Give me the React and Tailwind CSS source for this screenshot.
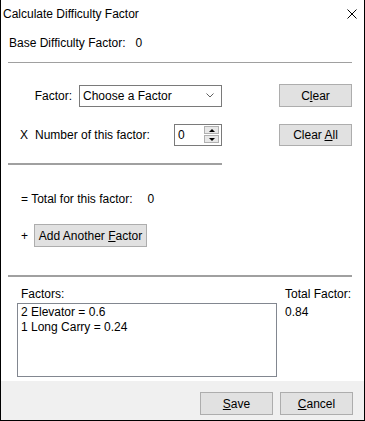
import React from 'react';

const FONT = { fontFamily: '"Liberation Sans", Arial, sans-serif' };

function WinButton({ children, className = '' }) {
  return (
    <div
      className={`flex items-center justify-center bg-[#e1e1e1] border border-[#adadad] text-[12px] leading-[16px] text-black ${className}`}
    >
      {children}
    </div>
  );
}

function Spinner({ value }) {
  return (
    <div className="flex w-[48px] h-[22px] border border-[#7a7a7a] bg-white">
      <div className="flex-1 pl-[3px] leading-[20px] text-black">{value}</div>
      <div className="flex flex-col pt-[1px] mr-[2px] gap-[1px]">
        <div className="flex items-center justify-center w-[15px] h-[8px] bg-[#e8e8e8] border border-[#b0b0b0]">
          <svg width="6" height="3" viewBox="0 0 6 3">
            <path d="M0 3 L3 0 L6 3 Z" fill="#000" />
          </svg>
        </div>
        <div className="flex items-center justify-center w-[15px] h-[8px] bg-[#e8e8e8] border border-[#b0b0b0]">
          <svg width="6" height="3" viewBox="0 0 6 3">
            <path d="M0 0 L6 0 L3 3 Z" fill="#000" />
          </svg>
        </div>
      </div>
    </div>
  );
}

export default function App() {
  const factors = ['2 Elevator = 0.6', '1 Long Carry = 0.24'];

  return (
    <div
      style={FONT}
      className="w-[365px] h-[421px] flex flex-col bg-white border-x border-b border-black text-[12px] leading-[16px] text-black"
    >
      {/* Title bar */}
      <div className="h-[27px] flex items-center justify-between pl-[2px] pr-[7px]">
        <span>Calculate Difficulty Factor</span>
        <svg width="10" height="10" viewBox="0 0 10 10">
          <path d="M0.5 0.5 L9.5 9.5 M9.5 0.5 L0.5 9.5" stroke="#000" strokeWidth="1" />
        </svg>
      </div>

      <div className="flex-1 flex flex-col">
        {/* Base factor */}
        <div className="mt-[8px] pl-[8px] flex">
          <span>Base Difficulty Factor:</span>
          <span className="ml-[10px]">0</span>
        </div>

        <div className="mt-[11px] ml-[7px] w-[344px] h-px bg-[#a0a0a0]" />

        {/* Factor row */}
        <div className="mt-[21px] flex items-center h-[23px]">
          <div className="w-[221px] flex items-center">
            <span className="w-[71px] text-right">Factor:</span>
            <div className="ml-[7px] w-[143px] h-[22px] flex items-center justify-between border border-[#7a7a7a] bg-white pl-[3px] pr-[7px]">
              <span>Choose a Factor</span>
              <svg width="8" height="5" viewBox="0 0 8 5">
                <path d="M0.5 0.5 L4 4 L7.5 0.5" fill="none" stroke="#606060" strokeWidth="1" />
              </svg>
            </div>
          </div>
          <WinButton className="ml-[57px] w-[73px] h-[23px]">
            <span>
              C<span className="underline">l</span>ear
            </span>
          </WinButton>
        </div>

        {/* Number row */}
        <div className="mt-[17px] flex items-center h-[22px]">
          <div className="w-[221px] flex items-center">
            <span className="w-[173px] pl-[19px] flex">
              <span>X</span>
              <span className="ml-[7px]">Number of this factor:</span>
            </span>
            <Spinner value="0" />
          </div>
          <WinButton className="ml-[57px] w-[73px] h-[22px]">
            <span>
              Clear <span className="underline">A</span>ll
            </span>
          </WinButton>
        </div>

        <div className="mt-[17px] ml-[7px] w-[214px] h-[2px] bg-[#a0a0a0]" />

        {/* Total row */}
        <div className="mt-[26px] pl-[20px] flex">
          <span>= Total for this factor:</span>
          <span className="ml-[15px]">0</span>
        </div>

        {/* Add row */}
        <div className="mt-[17px] pl-[20px] flex items-center h-[23px]">
          <span>+</span>
          <WinButton className="ml-[6px] w-[113px] h-[23px]">
            <span>
              Add Another <span className="underline">F</span>actor
            </span>
          </WinButton>
        </div>

        <div className="mt-[28px] ml-[7px] w-[344px] h-[2px] bg-[#a0a0a0]" />

        {/* Factors list */}
        <div className="mt-[9px] flex">
          <div className="pl-[16px] flex flex-col">
            <span className="pl-[4px]">Factors:</span>
            <div className="mt-[1px] w-[260px] h-[74px] border border-[#828790] bg-white pl-[3px] pt-[1px] leading-[15px]">
              {factors.map((f) => (
                <div key={f}>{f}</div>
              ))}
            </div>
          </div>
          <div className="ml-[8px] flex flex-col">
            <span>Total Factor:</span>
            <span className="mt-[2px]">0.84</span>
          </div>
        </div>
      </div>

      {/* Footer */}
      <div className="h-[39px] bg-[#f0f0f0] flex justify-end gap-[7px] pt-[11px] pr-[11px]">
        <WinButton className="w-[73px] h-[23px]">
          <span>
            <span className="underline">S</span>ave
          </span>
        </WinButton>
        <WinButton className="w-[73px] h-[23px]">
          <span>
            <span className="underline">C</span>ancel
          </span>
        </WinButton>
      </div>
    </div>
  );
}
